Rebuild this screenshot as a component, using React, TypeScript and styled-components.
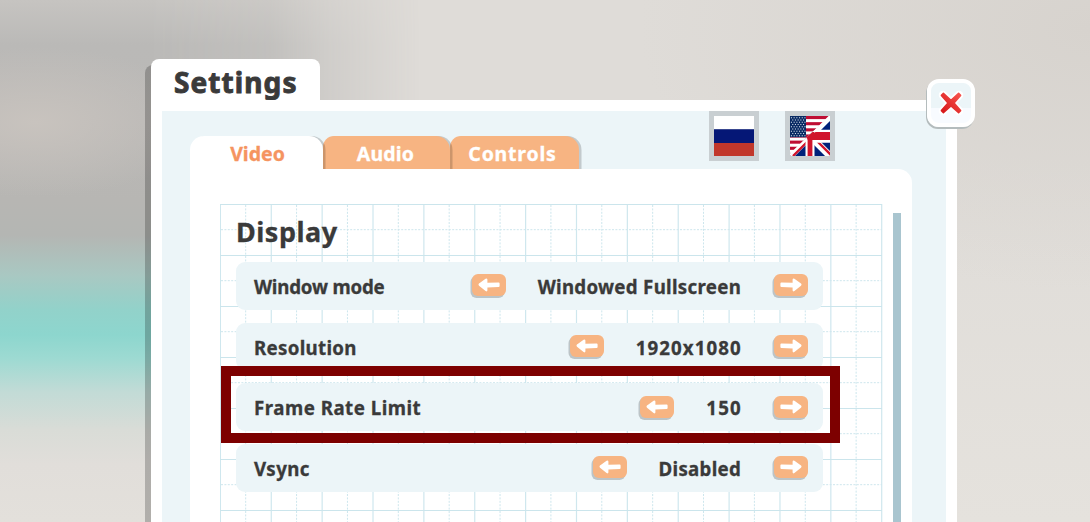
import React, { useState } from "react";
import styled, { createGlobalStyle } from "styled-components";

interface Setting {
  name: string;
  value: string;
  nameSpacing: number;
  valueSpacing: number;
  marked?: boolean;
}

const settings: Setting[] = [
  { name: "Window mode", value: "Windowed Fullscreen", nameSpacing: -0.2, valueSpacing: 0.3 },
  { name: "Resolution", value: "1920x1080", nameSpacing: 0.3, valueSpacing: 1.1 },
  { name: "Frame Rate Limit", value: "150", nameSpacing: 0.5, valueSpacing: 1.3, marked: true },
  { name: "Vsync", value: "Disabled", nameSpacing: 0.4, valueSpacing: 0.3 },
];

const tabs = [
  { name: "Video", width: 133, indent: 2, spacing: 0 },
  { name: "Audio", width: 127, indent: -2, spacing: 0.2 },
  { name: "Controls", width: 129, indent: -4, spacing: 0.8 },
];

const range = (count: number) => Array.from({ length: count }, (_, i) => i);

function Arrow({ flip }: { flip?: boolean }) {
  return (
    <svg width="22" height="14" viewBox="0 0 22 14">
      <path
        d="M0.4 5.5 Q0.4 4.5 1.4 4.5 L12.6 4.7 L12.6 1.4 Q13 -0.1 14.4 0.8 L21 5.4 Q22 6.6 21 7.8 L14.4 13 Q13 14 12.6 12.6 L12.6 9.4 L1.4 9 Q0.4 8.9 0.4 8 Z"
        fill="#fff"
        transform={flip ? "translate(22 0) scale(-1 1)" : undefined}
      />
    </svg>
  );
}

function GridPaper() {
  return (
    <Paper viewBox="0 0 663 318" width="663" height="318">
      {range(13).map((i) => (
        <path
          key={`dv${i}`}
          d={`M${25.7 + i * 50.87} 1 V318`}
          stroke="#cde6ed"
          strokeDasharray="2 1.4"
        />
      ))}
      {range(6).map((i) => (
        <path
          key={`dh${i}`}
          d={`M1 ${25.7 + i * 51} H662`}
          stroke="#cde6ed"
          strokeDasharray="2 1.4"
        />
      ))}
      {range(14).map((i) => (
        <path
          key={`v${i}`}
          d={`M${0.4 + i * 50.87} 0 V318`}
          stroke="#cfe7ee"
          strokeWidth="1.2"
        />
      ))}
      {range(7).map((i) => (
        <path key={`h${i}`} d={`M0 ${0.5 + i * 51} H662`} stroke="#cbe5ec" />
      ))}
    </Paper>
  );
}

function RussianFlag() {
  return (
    <svg width="40" height="40" viewBox="0 0 40 40">
      <path d="M0 0H40V13.3H0Z" fill="#fff" />
      <path d="M0 13.3H40V26.9H0Z" fill="#051776" />
      <path d="M0 26.9H40V40H0Z" fill="#c1372b" />
    </svg>
  );
}

function EnglishFlag() {
  return (
    <svg width="40" height="40" viewBox="0 0 40 40">
      <rect width="40" height="40" fill="#fff" />
      {range(7).map((i) => (
        <rect key={i} y={i * 6.15} width="40" height="3.1" fill="#bf0d33" />
      ))}
      <rect width="16" height="21.2" fill="#082a63" />
      {range(9).map((row) =>
        range(row % 2 ? 5 : 6).map((col) => (
          <rect
            key={`${row}-${col}`}
            x={(row % 2 ? 2.2 : 0.9) + col * 2.7}
            y={1.2 + row * 2.25}
            width="1.1"
            height="1.1"
            fill="#c9d5e2"
          />
        ))
      )}
      <clipPath id="diagonal">
        <path d="M40 0V40H0L17 21Z" />
      </clipPath>
      <g clipPath="url(#diagonal)">
        <rect width="40" height="40" fill="#00217a" />
        <path d="M0 40L40 0M20 20L42 42" stroke="#fff" strokeWidth="7" />
        <path d="M3 40L20 23M27 25L42 40" stroke="#d0142c" strokeWidth="2.4" />
        <path d="M20 24V40" stroke="#fff" strokeWidth="9" />
        <path d="M20 20.2H40" stroke="#fff" strokeWidth="13" />
        <path d="M20 20V40" stroke="#d0142c" strokeWidth="4.8" />
        <path d="M16 20H40" stroke="#d0142c" strokeWidth="8" />
      </g>
      <path d="M0 39L17 22.5M24 16L40 0" stroke="#fff" strokeWidth="2" />
    </svg>
  );
}

function SettingRow({ setting }: { setting: Setting }) {
  return (
    <Row>
      <Name $spacing={setting.nameSpacing}>{setting.name}</Name>
      <ArrowButton>
        <Arrow flip />
      </ArrowButton>
      <Value $spacing={setting.valueSpacing}>{setting.value}</Value>
      <ArrowButton>
        <Arrow />
      </ArrowButton>
      {setting.marked && <Marker />}
    </Row>
  );
}

export default function App() {
  const [activeTab, setActiveTab] = useState("Video");

  return (
    <Scene>
      <GlobalStyle />
      <Dialog>
        <DialogTitle>Settings</DialogTitle>
        <DialogBody>
          <Inner>
            <TopBar>
              <Tabs>
                {tabs.map((tab, index) => (
                  <Tab
                    key={tab.name}
                    $active={tab.name === activeTab}
                    $width={tab.width}
                    $indent={tab.indent}
                    $spacing={tab.spacing}
                    $layer={tabs.length - index}
                    onClick={() => setActiveTab(tab.name)}
                  >
                    {tab.name}
                  </Tab>
                ))}
              </Tabs>
              <Languages>
                <Flag>
                  <RussianFlag />
                </Flag>
                <Flag>
                  <EnglishFlag />
                </Flag>
              </Languages>
            </TopBar>
            <Content>
              <Sheet>
                <GridPaper />
                <SectionTitle>Display</SectionTitle>
                <Rows>
                  {settings.map((setting) => (
                    <SettingRow key={setting.name} setting={setting} />
                  ))}
                </Rows>
              </Sheet>
              <Scrollbar />
            </Content>
          </Inner>
          <CloseButton>
            <svg width="28" height="28" viewBox="0 0 28 28">
              <defs>
                <linearGradient id="cross" x1="0" y1="1" x2="1" y2="0">
                  <stop offset="0.1" stopColor="#d81a1c" />
                  <stop offset="0.9" stopColor="#f5504a" />
                </linearGradient>
              </defs>
              <path
                d="M6 6L22 22M22 6L6 22"
                stroke="#fff"
                strokeWidth="8.5"
                strokeLinecap="round"
              />
              <path
                d="M4.4 6.4L6.4 4.4L14 11.2L21.6 4.4L23.6 6.4L17 14L23.6 21.6L21.6 23.6L14 17L6.4 23.6L4.4 21.6L11 14Z"
                fill="url(#cross)"
                stroke="url(#cross)"
                strokeWidth="1.5"
                strokeLinejoin="round"
              />
            </svg>
          </CloseButton>
        </DialogBody>
      </Dialog>
    </Scene>
  );
}

const GlobalStyle = createGlobalStyle`
  * {
    box-sizing: border-box;
  }

  body {
    margin: 0;
    overflow: hidden;
    font-family: "Noto Sans", "Open Sans", sans-serif;
    font-weight: 700;
    color: #3a3a3a;
  }

  svg {
    display: block;
  }

  button {
    padding: 0;
    border: 0;
    font: inherit;
    cursor: pointer;
  }
`;

const Scene = styled.main`
  position: relative;
  width: 1090px;
  height: 522px;
  padding: 59px 133px 0 151px;
  overflow: hidden;
  background:
    radial-gradient(ellipse 450px 260px at 1090px 30px, #d7d3ce 0%, #d7d3ce00 100%),
    linear-gradient(#dfdcd8 0%, #dfdcd8 30%, #e5e2dd 100%);

  &::before {
    content: "";
    position: absolute;
    inset: 0;
    background:
      radial-gradient(ellipse 170px 75px at 35px 122px, #c8c3be 0%, #c8c3be00 100%),
      linear-gradient(
        #c6c4c1 0,
        #bab9b7 45px,
        #bab8b6 120px,
        #b7b6b3 200px,
        #b4b6b3 235px,
        #a9c8c2 275px,
        #92d2ca 310px,
        #8dd6ce 335px,
        #9ddad2 358px,
        #c2dbd6 392px,
        #d9dcd7 430px,
        #e1deda 465px,
        #e3e0db 522px
      );
    mask-image: linear-gradient(90deg, #000 150px, #000c 270px, #0006 330px, transparent 420px);
  }
`;

const Dialog = styled.section`
  position: relative;
  display: flex;
  flex-direction: column;
  align-items: flex-start;
  height: 480px;
`;

const DialogTitle = styled.h1`
  width: 169px;
  height: 42px;
  margin: 0 0 -1px;
  padding-left: 23px;
  border-radius: 8px 8px 0 0;
  background: #fff;
  box-shadow: -6px 6px 0 #00000038;
  font-size: 28px;
  line-height: 46px;
  letter-spacing: 1.1px;
  -webkit-text-stroke: 0.9px;
`;

const DialogBody = styled.div`
  position: relative;
  display: flex;
  flex: 1;
  width: 806px;
  padding: 11px 11px 0;
  background: #fff;
  box-shadow: -6px 7px 0 #00000038;
`;

const Inner = styled.div`
  display: flex;
  flex: 1;
  flex-direction: column;
  padding: 0 34px 0 28px;
  background: #ecf5f8;
`;

const TopBar = styled.div`
  display: flex;
  height: 58px;
`;

const Tabs = styled.nav`
  display: flex;
  width: 519px;
  padding-top: 25px;
`;

const Tab = styled.button<{
  $active: boolean;
  $width: number;
  $indent: number;
  $spacing: number;
  $layer: number;
}>`
  position: relative;
  z-index: ${({ $layer }) => $layer};
  width: ${({ $width }) => $width}px;
  height: 33px;
  border-radius: ${({ $active }) => ($active ? "14px" : "11px")} 14px 0 0;
  background: ${({ $active }) => ($active ? "#fff" : "#f7b482")};
  box-shadow: 2.5px 0 0 #0000002c;
  color: ${({ $active }) => ($active ? "#f59460" : "#fff")};
  font-size: 19.5px;
  line-height: 35px;
  letter-spacing: ${({ $spacing }) => $spacing}px;
  text-indent: ${({ $indent }) => $indent}px;
  -webkit-text-stroke: 0.3px;
`;

const Languages = styled.div`
  display: flex;
  gap: 26px;
`;

const Flag = styled.button`
  width: 50px;
  height: 50px;
  padding: 5px;
  background: #c9cfd2;
`;

const Content = styled.div`
  display: flex;
  flex: 1;
  gap: 11px;
  padding: 35px 0 0 30px;
  border-radius: 0 14px 0 0;
  background: #fff;
`;

const Sheet = styled.div`
  position: relative;
  width: 662px;
  padding: 11px 59px 0 16px;
`;

const Paper = styled.svg`
  position: absolute;
  top: 0;
  left: 0;
`;

const SectionTitle = styled.h2`
  position: relative;
  margin: 0;
  height: 47.2px;
  font-size: 27px;
  line-height: 34px;
  letter-spacing: 0.5px;
  -webkit-text-stroke: 0.3px;
`;

const Rows = styled.div`
  display: flex;
  flex-direction: column;
  gap: 13px;
`;

const Row = styled.div`
  position: relative;
  display: flex;
  align-items: center;
  height: 47.6px;
  padding: 0 15px 0 18px;
  border-radius: 9px;
  background: #ecf5f8;
  font-size: 18.7px;
  line-height: 46px;
  -webkit-text-stroke: 0.3px;
`;

const Name = styled.span<{ $spacing: number }>`
  flex: 1;
  padding-top: 2px;
  letter-spacing: ${({ $spacing }) => $spacing}px;
`;

const Value = styled.span<{ $spacing: number }>`
  padding: 2px ${({ $spacing }) => 33.2 - $spacing}px 0 32px;
  letter-spacing: ${({ $spacing }) => $spacing}px;
`;

const ArrowButton = styled.button`
  display: flex;
  align-items: center;
  justify-content: center;
  width: 34px;
  height: 22px;
  margin-bottom: 1px;
  border-radius: 6px;
  background: #f7b482;
  box-shadow: -1.5px 2px 0 #bcc4c7;
`;

const Marker = styled.div`
  position: absolute;
  top: -17.4px;
  left: -15px;
  width: 619px;
  height: 77px;
  border: 10px solid #7d0000;
`;

const Scrollbar = styled.div`
  width: 8px;
  margin-top: 9px;
  background: #a9c5cf;
`;

const CloseButton = styled.button`
  position: absolute;
  top: -21px;
  right: -18px;
  display: flex;
  align-items: center;
  justify-content: center;
  width: 48px;
  height: 48px;
  border: 4px solid #fff;
  border-radius: 12px;
  background: linear-gradient(#ecf5f8 62%, #f8fbff 62%);
  box-shadow: -1px 2px 0 #b4bcbd;
`;
